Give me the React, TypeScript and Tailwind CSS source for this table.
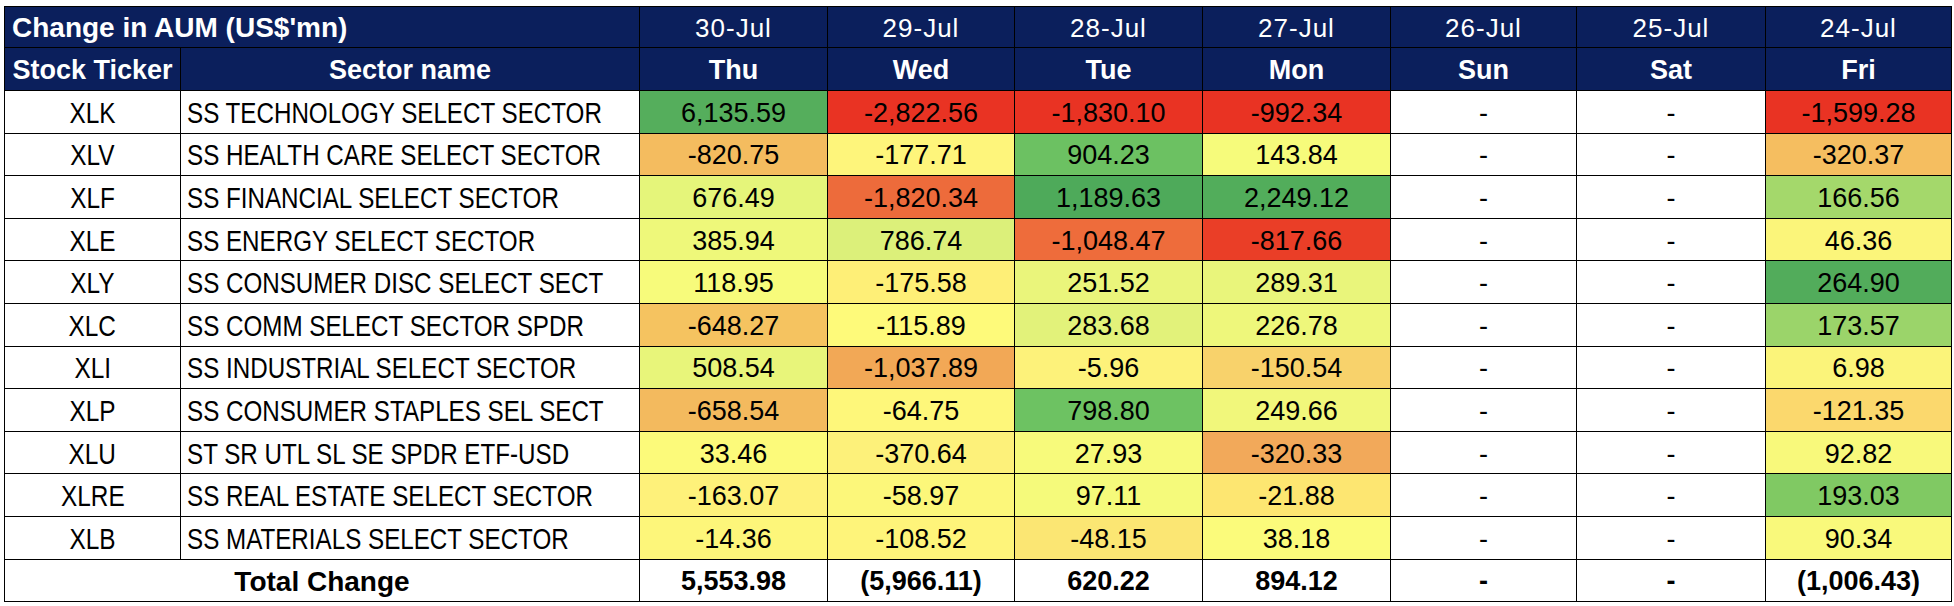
const dates = ["30-Jul", "29-Jul", "28-Jul", "27-Jul", "26-Jul", "25-Jul", "24-Jul"];
const days = ["Thu", "Wed", "Tue", "Mon", "Sun", "Sat", "Fri"];

type Cell = [string, string];

const rows: { ticker: string; name: string; cells: Cell[] }[] = [
  {
    ticker: "XLK",
    name: "SS TECHNOLOGY SELECT SECTOR",
    cells: [
      ["6,135.59", "bg-[#55ae5c]"],
      ["-2,822.56", "bg-[#e93323]"],
      ["-1,830.10", "bg-[#e93323]"],
      ["-992.34", "bg-[#e93323]"],
      ["-1,599.28", "bg-[#e93323]"],
    ],
  },
  {
    ticker: "XLV",
    name: "SS HEALTH CARE SELECT SECTOR",
    cells: [
      ["-820.75", "bg-[#f4bc5f]"],
      ["-177.71", "bg-[#fef57b]"],
      ["904.23", "bg-[#6cc162]"],
      ["143.84", "bg-[#f6fb7b]"],
      ["-320.37", "bg-[#f5be60]"],
    ],
  },
  {
    ticker: "XLF",
    name: "SS FINANCIAL SELECT SECTOR",
    cells: [
      ["676.49", "bg-[#e5f57a]"],
      ["-1,820.34", "bg-[#ed6b3b]"],
      ["1,189.63", "bg-[#4eaa5a]"],
      ["2,249.12", "bg-[#52ad5b]"],
      ["166.56", "bg-[#a4d86b]"],
    ],
  },
  {
    ticker: "XLE",
    name: "SS ENERGY SELECT SECTOR",
    cells: [
      ["385.94", "bg-[#eef87a]"],
      ["786.74", "bg-[#dcf07a]"],
      ["-1,048.47", "bg-[#ee6c3b]"],
      ["-817.66", "bg-[#ea3e27]"],
      ["46.36", "bg-[#fbf57a]"],
    ],
  },
  {
    ticker: "XLY",
    name: "SS CONSUMER DISC SELECT SECT",
    cells: [
      ["118.95", "bg-[#f7fb7b]"],
      ["-175.58", "bg-[#feef77]"],
      ["251.52", "bg-[#eaf57b]"],
      ["289.31", "bg-[#e9f57b]"],
      ["264.90", "bg-[#52ac5b]"],
    ],
  },
  {
    ticker: "XLC",
    name: "SS COMM SELECT SECTOR SPDR",
    cells: [
      ["-648.27", "bg-[#f5c360]"],
      ["-115.89", "bg-[#fefa7a]"],
      ["283.68", "bg-[#e2f27a]"],
      ["226.78", "bg-[#eef77b]"],
      ["173.57", "bg-[#9bd46a]"],
    ],
  },
  {
    ticker: "XLI",
    name: "SS INDUSTRIAL SELECT SECTOR",
    cells: [
      ["508.54", "bg-[#e8f57a]"],
      ["-1,037.89", "bg-[#f2a856]"],
      ["-5.96", "bg-[#fdf27a]"],
      ["-150.54", "bg-[#f8d26b]"],
      ["6.98", "bg-[#fbf47a]"],
    ],
  },
  {
    ticker: "XLP",
    name: "SS CONSUMER STAPLES SEL SECT",
    cells: [
      ["-658.54", "bg-[#f3ba5e]"],
      ["-64.75", "bg-[#fef77a]"],
      ["798.80", "bg-[#6dc262]"],
      ["249.66", "bg-[#f1f77b]"],
      ["-121.35", "bg-[#fbd86d]"],
    ],
  },
  {
    ticker: "XLU",
    name: "ST SR UTL SL SE SPDR ETF-USD",
    cells: [
      ["33.46", "bg-[#fcfa7a]"],
      ["-370.64", "bg-[#fdf17a]"],
      ["27.93", "bg-[#f7fa7b]"],
      ["-320.33", "bg-[#f2a95a]"],
      ["92.82", "bg-[#f8f97b]"],
    ],
  },
  {
    ticker: "XLRE",
    name: "SS REAL ESTATE SELECT SECTOR",
    cells: [
      ["-163.07", "bg-[#fef17a]"],
      ["-58.97", "bg-[#fcf77a]"],
      ["97.11", "bg-[#f5fa7b]"],
      ["-21.88", "bg-[#fde671]"],
      ["193.03", "bg-[#80c963]"],
    ],
  },
  {
    ticker: "XLB",
    name: "SS MATERIALS SELECT SECTOR",
    cells: [
      ["-14.36", "bg-[#fdf67a]"],
      ["-108.52", "bg-[#fef47a]"],
      ["-48.15", "bg-[#fbe673]"],
      ["38.18", "bg-[#fbfb7b]"],
      ["90.34", "bg-[#f9f97b]"],
    ],
  },
];

const totals = ["5,553.98", "(5,966.11)", "620.22", "894.12", "-", "-", "(1,006.43)"];

const td = "border border-black text-center align-middle pt-[3px]";

function DataRow({ ticker, name, cells }: { ticker: string; name: string; cells: Cell[] }) {
  const full: (Cell | null)[] = [cells[0], cells[1], cells[2], cells[3], null, null, cells[4]];
  return (
    <tr className="h-[42.6px]">
      <td className={`${td} text-[29px]`}>
        <span className="inline-block scale-x-[0.84]">{ticker}</span>
      </td>
      <td className="border border-black text-left align-middle pt-[3px] pl-[6px] text-[29px] whitespace-nowrap">
        <span className="inline-block origin-left scale-x-[0.834]">{name}</span>
      </td>
      {full.map((c, i) =>
        c ? (
          <td key={i} className={`${td} ${c[1]} text-[27px]`}>
            {c[0]}
          </td>
        ) : (
          <td key={i} className={`${td} bg-white text-[27px]`}>
            -
          </td>
        )
      )}
    </tr>
  );
}

export default function App() {
  return (
    <div className="min-h-screen bg-white pl-[4px] pt-[6px]">
      <table className="table-fixed border-collapse w-[1947px] text-black font-['Liberation_Sans',Arial,sans-serif] leading-none">
        <colgroup>
          <col className="w-[176px]" />
          <col className="w-[459px]" />
          <col className="w-[188px]" />
          <col className="w-[187px]" />
          <col className="w-[188px]" />
          <col className="w-[188px]" />
          <col className="w-[186px]" />
          <col className="w-[189px]" />
          <col className="w-[186px]" />
        </colgroup>
        <thead className="bg-[#0b1f5c] text-white">
          <tr className="h-[41px]">
            <th colSpan={2} className="border border-black text-left pl-[7px] pt-[2px] text-[28px] font-bold align-middle">
              Change in AUM (US$'mn)
            </th>
            {dates.map((d) => (
              <th key={d} className="border border-black font-normal text-[26px] tracking-[1px] align-middle pt-[2px]">
                {d}
              </th>
            ))}
          </tr>
          <tr className="h-[43px]">
            <th className="border border-black font-bold text-[27px] align-middle pt-[3px] whitespace-nowrap">Stock Ticker</th>
            <th className="border border-black font-bold text-[27px] align-middle pt-[3px]">Sector name</th>
            {days.map((d) => (
              <th key={d} className="border border-black font-bold text-[27px] align-middle pt-[3px]">
                {d}
              </th>
            ))}
          </tr>
        </thead>
        <tbody className="bg-white">
          {rows.map((r) => (
            <DataRow key={r.ticker} {...r} />
          ))}
          <tr className="h-[42px]">
            <td colSpan={2} className={`${td} font-bold text-[28px]`}>
              Total Change
            </td>
            {totals.map((t, i) => (
              <td key={i} className={`${td} font-bold text-[27px]`}>
                {t}
              </td>
            ))}
          </tr>
        </tbody>
      </table>
    </div>
  );
}
